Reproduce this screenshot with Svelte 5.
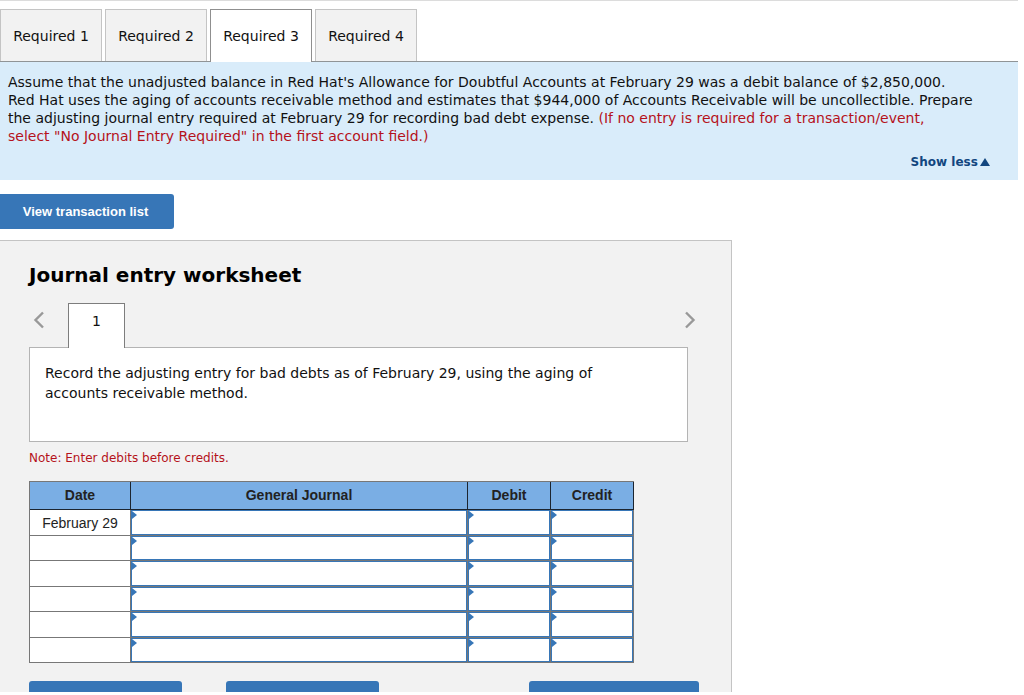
<script lang="ts">
	const tabs = ['Required 1', 'Required 2', 'Required 3', 'Required 4'];
	const accountFields = ['General Journal', 'Debit', 'Credit'];

	let activeTab = $state(2);
	let expanded = $state(true);
	let rows = $state(
		Array.from({ length: 6 }, (_, i) => ({
			date: i === 0 ? 'February 29' : '',
			values: ['', '', '']
		}))
	);

	function clearEntry(): void {
		for (const row of rows) {
			row.values = ['', '', ''];
		}
	}
</script>

<main class="page">
	<div class="tabs" role="tablist">
		{#each tabs as tab, i}
			<button
				class="tab"
				class:active={activeTab === i}
				role="tab"
				aria-selected={activeTab === i}
				onclick={() => (activeTab = i)}>{tab}</button
			>
		{/each}
	</div>

	<section class="instructions">
		{#if expanded}
			<p>
				Assume that the unadjusted balance in Red Hat's Allowance for Doubtful Accounts at February
				29 was a debit balance of $2,850,000.<br />
				Red Hat uses the aging of accounts receivable method and estimates that $944,000 of Accounts
				Receivable will be uncollectible. Prepare<br />
				the adjusting journal entry required at February 29 for recording bad debt expense.
				<span class="hint"
					>(If no entry is required for a transaction/event,<br />
					select "No Journal Entry Required" in the first account field.)</span
				>
			</p>
		{/if}
		<button class="toggle" onclick={() => (expanded = !expanded)}>
			{expanded ? 'Show less' : 'Show more'}
			<svg class:flipped={!expanded} width="10" height="8" viewBox="0 0 10 8" aria-hidden="true">
				<path d="M5 0L10 8H0Z" fill="currentColor" />
			</svg>
		</button>
	</section>

	<button class="action list">View transaction list</button>

	<section class="worksheet">
		<h2>Journal entry worksheet</h2>

		<div class="pager">
			<button class="arrow" aria-label="Previous entry">
				<svg width="12" height="18" viewBox="0 0 12 18" fill="none" aria-hidden="true">
					<path d="M11 1.5L3.5 9L11 16.5" stroke="currentColor" stroke-width="2.4" />
				</svg>
			</button>
			<button class="entry">1</button>
			<button class="arrow next" aria-label="Next entry">
				<svg width="12" height="18" viewBox="0 0 12 18" fill="none" aria-hidden="true">
					<path d="M2 1.5L9.5 9L2 16.5" stroke="currentColor" stroke-width="2.4" />
				</svg>
			</button>
		</div>

		<div class="description">
			<p>
				Record the adjusting entry for bad debts as of February 29, using the aging of accounts
				receivable method.
			</p>
		</div>

		<p class="note">Note: Enter debits before credits.</p>

		<table>
			<thead>
				<tr>
					<th class="date">Date</th>
					<th>General Journal</th>
					<th class="amount">Debit</th>
					<th class="amount">Credit</th>
				</tr>
			</thead>
			<tbody>
				{#each rows as row, r}
					<tr>
						<td>{row.date}</td>
						{#each accountFields as field, f}
							<td>
								<div class="field">
									<input aria-label="{field}, line {r + 1}" bind:value={row.values[f]} />
								</div>
							</td>
						{/each}
					</tr>
				{/each}
			</tbody>
		</table>

		<div class="actions">
			<button class="action">Record entry</button>
			<button class="action" onclick={clearEntry}>Clear entry</button>
			<button class="action journal">View general journal</button>
		</div>
	</section>
</main>

<style>
	:global(body) {
		background: #fff;
	}
	.page {
		box-sizing: border-box;
		height: calc(100vh - 3px);
		margin-right: 6px;
		overflow: hidden;
		border-top: 1px solid #dcdcdc;
		color: #111;
		font-family: Verdana, 'DejaVu Sans', sans-serif;
		font-size: 14px;
	}
	button {
		padding: 0;
		border: 0;
		background: none;
		color: inherit;
		font: inherit;
		cursor: pointer;
	}
	p,
	h2 {
		margin: 0;
	}

	.tabs {
		display: flex;
		gap: 3px;
		padding-top: 8px;
		border-bottom: 1px solid #909496;
	}
	.tab {
		width: 102px;
		height: 52px;
		border: 1px solid #c4c4c4;
		border-bottom: 0;
		background: #f2f2f2;
	}
	.tab.active {
		height: 53px;
		margin-bottom: -1px;
		border-color: #8f8f8f;
		background: #fff;
	}

	.instructions {
		display: flex;
		flex-direction: column;
		padding: 11px 8px 9px;
		background: #d9ecfa;
		line-height: 18px;
	}
	.hint,
	.note {
		color: #b5121b;
	}
	.toggle {
		align-self: flex-end;
		margin: 8px 20px 0 0;
		color: #12467f;
		font-size: 12px;
		font-weight: bold;
		line-height: 18px;
	}
	.toggle svg {
		margin-left: -2px;
	}
	.flipped {
		transform: rotate(180deg);
	}

	.action {
		height: 35px;
		border-radius: 3px;
		background: #3776b7;
		color: #fff;
		font: bold 13px Arial, 'Liberation Sans', sans-serif;
	}
	.list {
		display: block;
		width: 174px;
		margin: 14px 0 11px;
		padding-right: 3px;
		border-radius: 0 3px 3px 0;
	}

	.worksheet {
		box-sizing: border-box;
		max-width: 732px;
		padding: 20px 32px 20px 29px;
		border: 1px solid #c4c4c4;
		border-width: 1px 1px 0 0;
		background: #f2f2f2;
	}
	h2 {
		color: #000;
		font-size: 20px;
		line-height: 28px;
	}
	.pager {
		display: flex;
		align-items: flex-start;
		margin-top: 14px;
	}
	.arrow {
		display: flex;
		margin: 8px 24px 0 3px;
		color: #999;
	}
	.next {
		margin: 8px 3px 0 auto;
	}
	.entry {
		z-index: 1;
		width: 57px;
		height: 45px;
		margin-bottom: -1px;
		padding-bottom: 10px;
		border: 1px solid #7d7d7d;
		border-bottom: 0;
		background: #fff;
	}
	.description {
		box-sizing: border-box;
		min-height: 95px;
		margin-right: 11px;
		padding: 15px 40px 15px 15px;
		border: 1px solid #b4b4b4;
		background: #fff;
		line-height: 20px;
	}
	.note {
		margin: 8px 0 14px;
		font-size: 12px;
		line-height: 17px;
	}

	table {
		box-sizing: border-box;
		width: 605px;
		max-width: 100%;
		border: 1px solid #777;
		border-width: 1px 0 0 1px;
		border-collapse: separate;
		border-spacing: 0;
		table-layout: fixed;
		color: #222;
		font: 14px Arial, 'Liberation Sans', sans-serif;
	}
	th,
	td {
		box-sizing: border-box;
		padding: 0;
		border: 1px solid #777;
		border-width: 0 1px 1px 0;
		text-align: center;
	}
	th {
		height: 28px;
		padding-bottom: 1px;
		border-color: #1c2530;
		background: #7aaee4;
	}
	.date {
		width: 101px;
	}
	.amount {
		width: 83px;
	}
	td {
		height: 25px;
		background: #fff;
	}
	tr:nth-child(odd) td {
		height: 26px;
	}
	.field {
		position: relative;
	}
	.field::before {
		content: '';
		position: absolute;
		top: 1px;
		left: 1px;
		border: 4px solid transparent;
		border-right: 0;
		border-left: 5px solid #3776b7;
	}
	input {
		display: block;
		box-sizing: border-box;
		width: 100%;
		height: 24px;
		padding: 0 8px;
		border: 1px solid #3776b7;
		outline: 0;
		font: inherit;
	}
	tr:nth-child(odd) input {
		height: 25px;
	}

	.actions {
		display: flex;
		margin-top: 18px;
	}
	.actions .action {
		width: 153px;
		margin-right: 44px;
	}
	.actions .journal {
		width: 170px;
		margin: 0 0 0 auto;
	}
</style>
